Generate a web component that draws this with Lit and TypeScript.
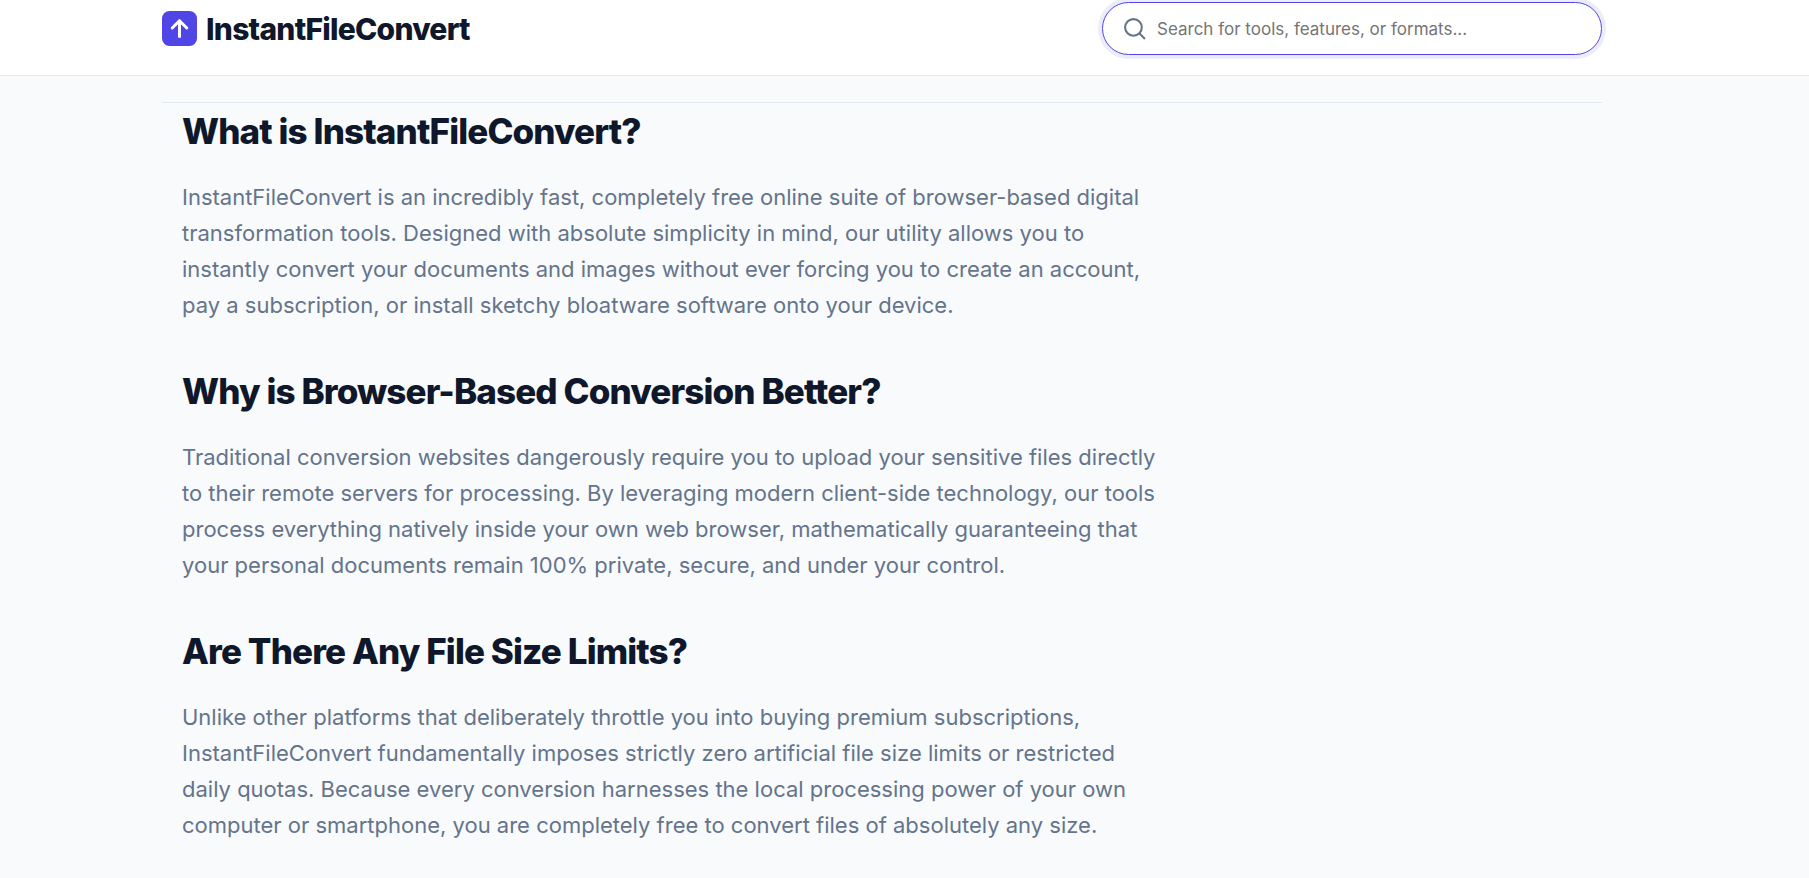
import { LitElement, html, css } from "lit";
import { customElement } from "lit/decorators.js";

const ARTICLES = [
  {
    title: "What is InstantFileConvert?",
    body: "InstantFileConvert is an incredibly fast, completely free online suite of browser-based digital transformation tools. Designed with absolute simplicity in mind, our utility allows you to instantly convert your documents and images without ever forcing you to create an account, pay a subscription, or install sketchy bloatware software onto your device.",
  },
  {
    title: "Why is Browser-Based Conversion Better?",
    body: "Traditional conversion websites dangerously require you to upload your sensitive files directly to their remote servers for processing. By leveraging modern client-side technology, our tools process everything natively inside your own web browser, mathematically guaranteeing that your personal documents remain 100% private, secure, and under your control.",
  },
  {
    title: "Are There Any File Size Limits?",
    body: "Unlike other platforms that deliberately throttle you into buying premium subscriptions, InstantFileConvert fundamentally imposes strictly zero artificial file size limits or restricted daily quotas. Because every conversion harnesses the local processing power of your own computer or smartphone, you are completely free to convert files of absolutely any size.",
  },
];

@customElement("app-root")
export class AppRoot extends LitElement {
  static styles = css`
    :host {
      display: block;
      min-height: 100vh;
      background: #f8fafc;
      color: #0f172a;
      font-family: Inter, sans-serif;
    }
    * {
      box-sizing: border-box;
    }
    .header {
      padding: 2px 45px 20px 0;
      background: #fff;
      border-bottom: 1px solid #e2e8f0;
    }
    .bar {
      display: flex;
      align-items: center;
      justify-content: space-between;
      max-width: 1440px;
      margin: 0 auto;
    }
    .brand {
      display: flex;
      align-items: center;
      gap: 9px;
      color: inherit;
      text-decoration: none;
      font-size: 30px;
      font-weight: 800;
      letter-spacing: -0.025em;
    }
    .logo {
      width: 35px;
      height: 35px;
    }
    .search {
      display: flex;
      align-items: center;
      gap: 10px;
      width: 500px;
      height: 53px;
      padding: 0 19px;
      border: 1px solid #4f46e5;
      border-radius: 27px;
      background: #fff;
      box-shadow: 0 0 0 4px rgba(79, 70, 229, 0.1);
    }
    .search svg {
      flex: none;
      width: 25px;
      height: 25px;
      color: #64748b;
    }
    .search input {
      flex: 1;
      min-width: 0;
      padding: 0;
      border: 0;
      outline: 0;
      background: none;
      font: 400 17px/24px Inter, sans-serif;
      color: #0f172a;
    }
    .search input::placeholder {
      color: #757575;
    }
    .main {
      padding: 26px 45px 0 0;
    }
    .content {
      max-width: 1440px;
      margin: 0 auto;
      padding: 8px 20px 0;
      border-top: 1px solid #e2e8f0;
    }
    .article {
      max-width: 980px;
      padding-bottom: 48px;
    }
    h2 {
      margin: 0 0 28px;
      font-size: 35px;
      line-height: 40px;
      font-weight: 800;
      letter-spacing: -0.025em;
    }
    p {
      margin: 0;
      font-size: 22px;
      line-height: 36px;
      color: #64748b;
    }
  `;

  render() {
    return html`
      <header class="header">
        <div class="bar">
          <a class="brand" href="#">
            <svg class="logo" viewBox="0 0 35 35" aria-hidden="true">
              <rect width="35" height="35" rx="7.5" fill="#4f46e5" />
              <path d="M17.5 25.5V9.7M10.2 17l7.3-7.3 7.3 7.3" fill="none" stroke="#fff" stroke-width="3" stroke-linecap="round" stroke-linejoin="round" />
            </svg>
            <span>InstantFileConvert</span>
          </a>
          <label class="search">
            <svg viewBox="0 0 24 24" fill="none" stroke="currentColor" stroke-width="2" aria-hidden="true">
              <circle cx="11" cy="11" r="8" />
              <path d="m22 22-5.35-5.35" />
            </svg>
            <input type="search" aria-label="Search tools" placeholder="Search for tools, features, or formats..." />
          </label>
        </div>
      </header>
      <main class="main">
        <div class="content">
          ${ARTICLES.map(
            (a) => html`<section class="article">
              <h2>${a.title}</h2>
              <p>${a.body}</p>
            </section>`
          )}
        </div>
      </main>
    `;
  }
}
